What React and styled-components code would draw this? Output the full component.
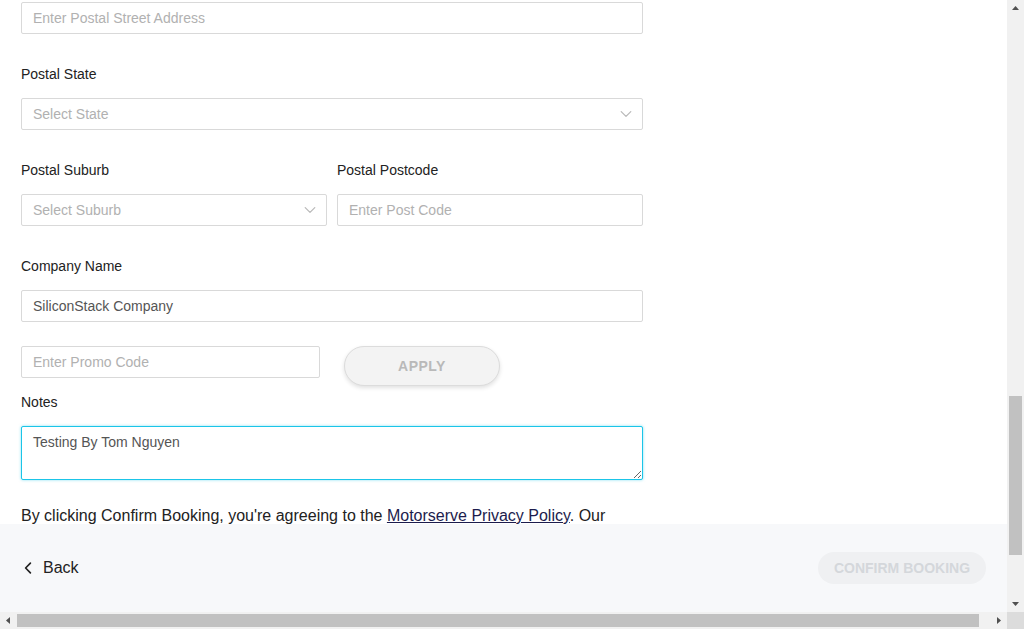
import React from 'react';
import styled, { createGlobalStyle } from 'styled-components';

const GlobalStyle = createGlobalStyle`
  html, body {
    margin: 0;
    padding: 0;
    overflow: hidden;
    background: #fff;
  }
  * {
    box-sizing: border-box;
  }
`;

const COLORS = {
  TEXT: '#222222',
  BORDER: '#d9d9d9',
  PLACEHOLDER: '#b1b1b1',
  VALUE: '#555555',
  CYAN: '#1bc5e8',
  FOOTER: '#f7f8fa',
  TRACK: '#f1f1f1',
  THUMB: '#c1c1c1',
};

function Chevron({ size = 10, color = '#b8b8b8', dir = 'down', width = 1 }) {
  const points = dir === 'down' ? '1,3 5,7 9,3' : '7,1 3,5 7,9';
  return (
    <svg width={size} height={size} viewBox="0 0 10 10" fill="none">
      <polyline points={points} stroke={color} strokeWidth={width} strokeLinecap="round" strokeLinejoin="round" />
    </svg>
  );
}

function Arrow({ dir }) {
  const shapes = {
    up: '1,6 4.5,2 8,6',
    down: '1,3 4.5,7 8,3',
    left: '6,1 2,4.5 6,8',
    right: '3,1 7,4.5 3,8',
  };
  return (
    <svg width="9" height="9" viewBox="0 0 9 9">
      <polygon points={shapes[dir]} fill="#505050" />
    </svg>
  );
}

function BookingForm() {
  return (
    <Window>
      <GlobalStyle />
      <Main>
        <Content>
          <Form>
            <Field first>
              <Input placeholder="Enter Postal Street Address" />
            </Field>

            <Field>
              <Label>Postal State</Label>
              <Select>
                <span>Select State</span>
                <Chevron size={12} />
              </Select>
            </Field>

            <Row>
              <Field>
                <Label>Postal Suburb</Label>
                <Select>
                  <span>Select Suburb</span>
                  <Chevron size={12} />
                </Select>
              </Field>
              <Field>
                <Label>Postal Postcode</Label>
                <Input placeholder="Enter Post Code" />
              </Field>
            </Row>

            <Field>
              <Label>Company Name</Label>
              <Input defaultValue="SiliconStack Company" />
            </Field>

            <PromoRow>
              <Input placeholder="Enter Promo Code" />
              <ApplyButton>APPLY</ApplyButton>
            </PromoRow>

            <Field tight>
              <Label>Notes</Label>
              <TextArea defaultValue="Testing By Tom Nguyen" />
            </Field>

            <Agreement>
              By clicking Confirm Booking, you're agreeing to the <a href="#privacy">Motorserve Privacy Policy</a>. Our
            </Agreement>
          </Form>
        </Content>

        <Footer>
          <BackLink>
            <Chevron size={12} color="#222" dir="left" width={1.4} />
            Back
          </BackLink>
          <ConfirmButton disabled>CONFIRM BOOKING</ConfirmButton>
        </Footer>
      </Main>

      <VScroll>
        <ArrowCell><Arrow dir="up" /></ArrowCell>
        <VTrack>
          <VThumb />
        </VTrack>
        <ArrowCell><Arrow dir="down" /></ArrowCell>
      </VScroll>

      <HScroll>
        <ArrowCell><Arrow dir="left" /></ArrowCell>
        <HTrack>
          <HThumb />
        </HTrack>
        <ArrowCell><Arrow dir="right" /></ArrowCell>
      </HScroll>

      <Corner />
    </Window>
  );
}

const Window = styled.div`
  width: 1024px;
  height: 629px;
  display: grid;
  grid-template-columns: 1fr 17px;
  grid-template-rows: 1fr 17px;
  font-family: "Liberation Sans", Arial, sans-serif;
  overflow: hidden;
`;

const Main = styled.div`
  display: flex;
  flex-direction: column;
  min-height: 0;
  overflow: hidden;
`;

const Content = styled.div`
  flex: 1;
  overflow: hidden;
  padding: 2px 0 0 21px;
`;

const Form = styled.div`
  width: 622px;
  display: flex;
  flex-direction: column;
`;

const Row = styled.div`
  display: grid;
  grid-template-columns: 1fr 1fr;
  column-gap: 10px;
`;

const Field = styled.div`
  display: flex;
  flex-direction: column;
  margin-top: ${p => (p.first ? '0' : p.tight ? '6px' : '30px')};
`;

const Label = styled.label`
  font-size: 14px;
  line-height: 20px;
  color: ${COLORS.TEXT};
  margin-bottom: 14px;
`;

const Input = styled.input`
  width: 100%;
  height: 32px;
  border: 1px solid ${COLORS.BORDER};
  border-radius: 2px;
  padding: 0 11px;
  font-family: inherit;
  font-size: 14px;
  color: ${COLORS.VALUE};
  background: #fff;
  outline: none;

  &::placeholder {
    color: ${COLORS.PLACEHOLDER};
  }
`;

const Select = styled.div`
  height: 32px;
  border: 1px solid ${COLORS.BORDER};
  border-radius: 2px;
  padding: 0 10px 0 11px;
  display: flex;
  align-items: center;
  justify-content: space-between;
  font-size: 14px;
  color: ${COLORS.PLACEHOLDER};
  background: #fff;
`;

const PromoRow = styled.div`
  display: grid;
  grid-template-columns: 299px 156px;
  column-gap: 24px;
  align-items: start;
  margin-top: 24px;
`;

const ApplyButton = styled.button`
  height: 40px;
  border: 1px solid #dcdcdc;
  border-radius: 20px;
  background: #f3f3f3;
  color: #b9b9b9;
  font-family: inherit;
  font-size: 14px;
  font-weight: bold;
  letter-spacing: 0.5px;
  box-shadow: 0 2px 4px rgba(0, 0, 0, 0.12);
  cursor: pointer;
`;

const TextArea = styled.textarea`
  width: 100%;
  height: 54px;
  border: 1px solid ${COLORS.CYAN};
  border-radius: 2px;
  padding: 7px 11px;
  font-family: inherit;
  font-size: 14px;
  color: ${COLORS.VALUE};
  box-shadow: 0 0 3px rgba(27, 197, 232, 0.55);
  outline: none;
  resize: vertical;
`;

const Agreement = styled.p`
  margin: 24px 0 0;
  font-size: 16px;
  line-height: 20px;
  padding-top: 2px;
  color: ${COLORS.TEXT};

  a {
    color: #1c1c4d;
    text-decoration: underline;
  }
`;

const Footer = styled.div`
  height: 88px;
  flex-shrink: 0;
  background: ${COLORS.FOOTER};
  display: flex;
  align-items: center;
  justify-content: space-between;
  padding: 0 21px 0 22px;
`;

const BackLink = styled.a`
  display: flex;
  align-items: center;
  gap: 9px;
  font-size: 16px;
  color: ${COLORS.TEXT};
  cursor: pointer;
`;

const ConfirmButton = styled.button`
  width: 168px;
  height: 32px;
  border: none;
  border-radius: 16px;
  background: #eff0f2;
  color: #d4d7db;
  font-family: inherit;
  font-size: 14px;
  font-weight: bold;
`;

const VScroll = styled.div`
  background: ${COLORS.TRACK};
  display: flex;
  flex-direction: column;
`;

const HScroll = styled.div`
  background: ${COLORS.TRACK};
  display: flex;
`;

const ArrowCell = styled.div`
  width: 17px;
  height: 17px;
  flex-shrink: 0;
  display: flex;
  align-items: center;
  justify-content: center;
`;

const VTrack = styled.div`
  flex: 1;
  display: flex;
  flex-direction: column;
  padding: 0 2px;
`;

const VThumb = styled.div`
  margin-top: 379px;
  height: 159px;
  background: ${COLORS.THUMB};
`;

const HTrack = styled.div`
  flex: 1;
  display: flex;
  align-items: center;
`;

const HThumb = styled.div`
  width: 962px;
  height: 13px;
  background: ${COLORS.THUMB};
`;

const Corner = styled.div`
  background: #dcdcdc;
`;

export default BookingForm;
